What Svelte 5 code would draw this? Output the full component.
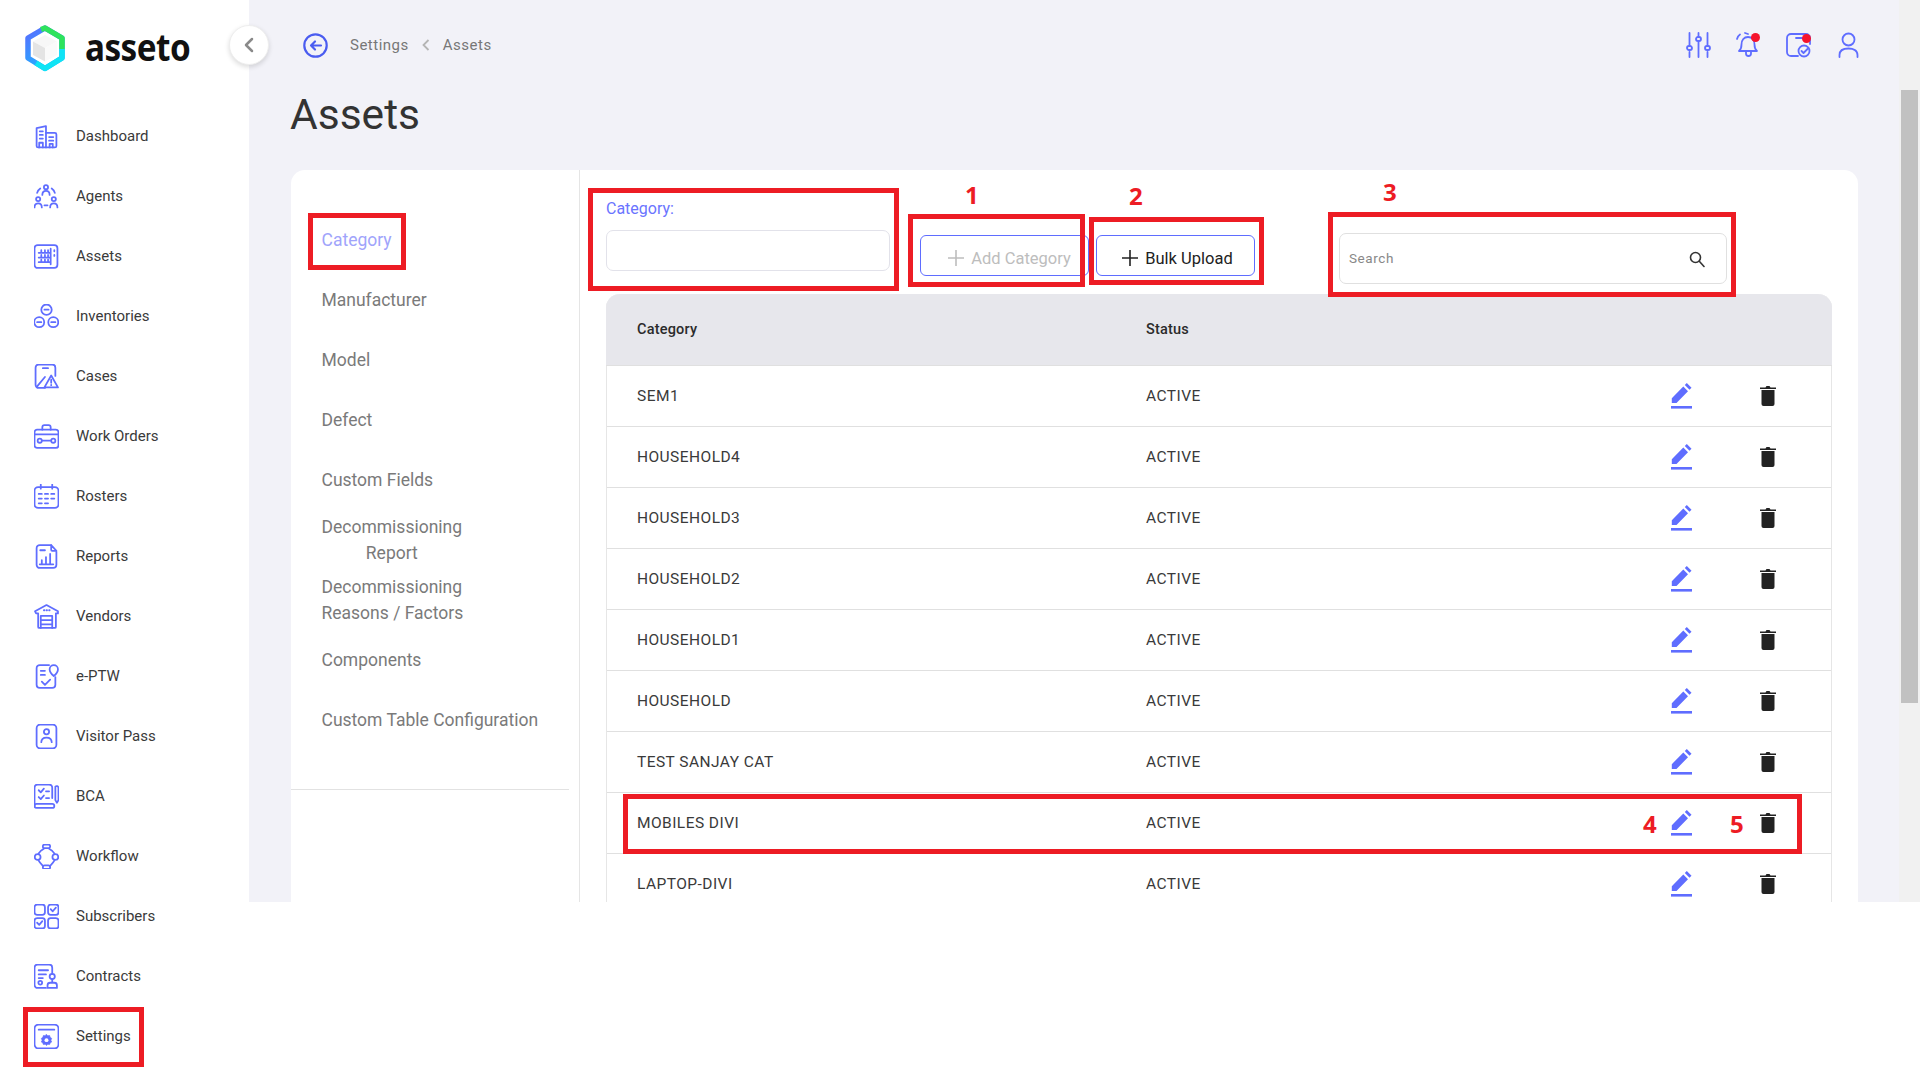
<script lang="ts">
  const g = (s: string) => s;

  const navItems = [
    { label: 'Dashboard', icon: g('<path d="M3 4.500 12 2.500V23H4.500A1.500 1.500 0 0 1 3 21.500Z"/><path d="M12 9h8.500A1.500 1.500 0 0 1 22 10.500v11a1.500 1.500 0 0 1-1.500 1.500H12"/><path d="M6 7.500h3M6 11h3M6 14.500h3M15 13h4M15 16.500h4M5.500 23v-4.500h3.500V23M15.500 23v-3.500h3V23"/>') },
    { label: 'Agents', icon: g('<circle cx="12" cy="3.500" r="2"/><circle cx="4.500" cy="15" r="2"/><circle cx="19.500" cy="15" r="2"/><path d="M8.500 11c0-2.500 1.500-4 3.500-4s3.500 1.500 3.500 4M3.500 9C4 7 5 5.800 6.500 4.800M20.500 9C20 7 19 5.800 17.500 4.800M1 23c0-2.500 1.500-4 3.500-4S8 20.500 8 23M16 23c0-2.500 1.500-4 3.500-4s3.500 1.500 3.500 4M10.500 21h3"/>') },
    { label: 'Assets', icon: g('<rect x="1" y="1.500" width="22" height="22" rx="3"/><path d="M5 9h11M5 13.500h11M5 18h11M7.500 6.500V9M11 6.500V9M14 6.500V9M7.500 11v2.500M11 11v2.500M14 11v2.500M7.500 15.500V18M11 15.500V18M14 15.500V18M16.500 5v15M20 6.500v1M20 11v1"/>') },
    { label: 'Inventories', icon: g('<circle cx="12.500" cy="6" r="5"/><circle cx="5.500" cy="18" r="4.800"/><circle cx="19" cy="18" r="4.800"/><path d="M10.500 6h4M3.500 18h4M17 18h4"/>') },
    { label: 'Cases', icon: g('<path d="M11 23.500H5a3 3 0 0 1-3-3V4a3 3 0 0 1 3-3h13a3 3 0 0 1 3 3v8"/><path d="M9 4.500h5M3.500 22 11 13M17 11.500 23.500 23H10.500Z"/><path d="M17 15.500v3M17 20.500v.3"/>') },
    { label: 'Work Orders', icon: g('<rect x="1" y="6" width="23" height="17.500" rx="2.500"/><path d="M8.500 6V3.500A2 2 0 0 1 10.500 1.500h4a2 2 0 0 1 2 2V6M1 10.500h23M8 16.500h9"/><circle cx="6" cy="16.500" r="2"/><circle cx="19" cy="16.500" r="2"/>') },
    { label: 'Rosters', icon: g('<rect x="1" y="3.500" width="23" height="20" rx="3.500"/><path d="M7 1v4M18 1v4M5 10h3M11 10h3M17 10h3M5 14.500h3M11 14.500h3M17 14.500h3M5 19h3M11 19h3"/>') },
    { label: 'Reports', icon: g('<path d="M22 8v12.500a3 3 0 0 1-3 3H6a3 3 0 0 1-3-3V4.500a3 3 0 0 1 3-3h11"/><path d="M17 1.500 22 7h-4a1 1 0 0 1-1-1ZM6.500 6.500H11M6 20h13M8 19v-3M12 19v-6M16 19v-9"/>') },
    { label: 'Vendors', icon: g('<path d="M1.500 7.500 12.500 1.500l11 6v2h-2v13a1 1 0 0 1-1 1h-15a1 1 0 0 1-1-1v-13h-2Z"/><path d="M7 23.500V12h11v11.500M7 16h11M7 20h11M10 6.500h.5M12.500 6.500h.5M15 6.500h.5"/>') },
    { label: 'e-PTW', icon: g('<path d="M15 1.500H6a3 3 0 0 0-3 3v16a3 3 0 0 0 3 3h12a3 3 0 0 0 3-3V13"/><path d="M7 7h4M7 11h4M8 17.500l3 3 5-5"/><path d="M19.500 12c-2.500-2-4-4-4-6.500a4 4 0 0 1 8 0c0 2.500-1.500 4.500-4 6.500Z"/>') },
    { label: 'Visitor Pass', icon: g('<rect x="3" y="1" width="19" height="23" rx="3.500"/><circle cx="12.500" cy="8" r="2.500"/><path d="M7.500 18c0-3 2-4.500 5-4.500s5 1.500 5 4.500"/>') },
    { label: 'BCA', icon: g('<path d="M18 14V4a3 3 0 0 0-3-3H4a3 3 0 0 0-3 3v18"/><rect x="1" y="19.500" width="19" height="4" rx="2"/><path d="M5 6.500l2 2 3-3.500M5 13l2 2 3-3.500M12 7.500h3M12 14h3"/><path d="M21 3a1.800 1.800 0 0 1 3 1v12l-1.500 2.500L21 16V4Z"/>') },
    { label: 'Workflow', icon: g('<rect x="9" y="1" width="7" height="3.500" rx="1.700"/><rect x="9" y="21" width="7" height="3.500" rx="1.700"/><circle cx="4" cy="13" r="2.800"/><circle cx="21" cy="13" r="2.800"/><path d="M5 9.500C6 7.500 8 6 10 5M20 9.500C19 7.500 17 6 15 5M5 16.500C6 18.500 7.500 20 9 21.500M20 16.500C19 18.500 17.500 20 16 21.500"/>') },
    { label: 'Subscribers', icon: g('<rect x="1" y="1" width="10" height="10" rx="2.500"/><rect x="14" y="1" width="10" height="10" rx="2.500"/><rect x="1" y="14" width="10" height="10" rx="2.500"/><rect x="14" y="14" width="10" height="10" rx="2.500"/><path d="M16.500 5.500l2 2 3-3.500M3.500 18.500l2 2 3-3.500"/>') },
    { label: 'Contracts', icon: g('<path d="M12 23.500H4a3 3 0 0 1-3-3V4a3 3 0 0 1 3-3h11a3 3 0 0 1 3 3v6"/><path d="M5 6.500h9M5 10.500h7M5 14h4"/><circle cx="6.500" cy="18.500" r="1.800"/><circle cx="18" cy="12.500" r="2.500"/><path d="M18 15v3M13.500 23.500v-2.500a2.500 2.500 0 0 1 2.500-2.500h4a2.500 2.500 0 0 1 2.500 2.500v2.500Z"/>') },
    { label: 'Settings', icon: g('<rect x="1" y="1" width="23" height="23" rx="4"/><path d="M5 6h15"/><path d="M12.500 10.500l1.200 1.300 1.800-.3.500 1.800 1.500 1-.8 1.700.8 1.700-1.500 1-.5 1.500-1.800-.2-1.200 1.200-1.200-1.200-1.800.2-.5-1.500-1.500-1 .8-1.700-.8-1.700 1.500-1 .5-1.800 1.800.3Z" fill="currentColor" stroke-width="0.600"/><circle cx="12.500" cy="16" r="1.900" fill="#fff" stroke="none"/>') }
  ];

  const tabs = [
    'Manufacturer',
    'Model',
    'Defect',
    'Custom Fields'
  ];

  const rows = [
    'SEM1',
    'HOUSEHOLD4',
    'HOUSEHOLD3',
    'HOUSEHOLD2',
    'HOUSEHOLD1',
    'HOUSEHOLD',
    'TEST SANJAY CAT',
    'MOBILES DIVI',
    'LAPTOP-DIVI'
  ];
</script>

<div class="app">
  <aside class="sidebar">
    <div class="logo">
      <svg width="42" height="47" viewBox="0 0 42 47" fill="none">
        <defs>
          <linearGradient id="hexL" x1="0" y1="0" x2="0.6" y2="1">
            <stop offset="0" stop-color="#5a6cff" />
            <stop offset="1" stop-color="#19b8ff" />
          </linearGradient>
        </defs>
        <path d="M21 3 38 13V33L21 43.500 4 33V13Z" fill="#fff" stroke="url(#hexL)" stroke-width="5.500" stroke-linejoin="round" />
        <path d="M17 4.500 21 3 38 13V24" stroke="#2ee35c" stroke-width="5.500" stroke-linejoin="round" />
        <path d="M38 24V33L21 43.500 12 38" stroke="#0fe4f5" stroke-width="5.500" stroke-linejoin="round" />
        <path d="M21 10 33 16.500 21 23 9 16.500Z" fill="#f7f7f7" />
        <path d="M9 16.500 21 23V36.500L9 30Z" fill="#e4e4e4" />
        <path d="M33 16.500 21 23V36.500L33 30Z" fill="#fafafa" />
      </svg>
      <span class="wordmark">asseto</span>
    </div>

    <nav class="nav">
      {#each navItems as item}
        <div class="navItem">
          <svg class="navIcon" viewBox="0.5 0.500 24 24" fill="none" stroke="currentColor" stroke-width="1.700" stroke-linecap="round" stroke-linejoin="round">
            {@html item.icon}
          </svg>
          <span>{item.label}</span>
        </div>
      {/each}
    </nav>

    <div class="mark settingsMark"></div>
  </aside>

  <button class="collapse" aria-label="Collapse">
    <svg width="14" height="16" viewBox="0 0 14 16" fill="none" stroke="#8a8a8a" stroke-width="2.500" stroke-linecap="round" stroke-linejoin="round">
      <path d="M10 2 4 8l6 6" />
    </svg>
  </button>

  <main class="main">
    <header class="topbar">
      <div class="crumbs">
        <svg class="back" width="25" height="25" viewBox="0 0 25 25" fill="none" stroke="#4a5cf0" stroke-width="2.200" stroke-linecap="round" stroke-linejoin="round">
          <circle cx="12.500" cy="12.500" r="11.200" />
          <path d="M18 12.500H8M12 8.500l-4 4 4 4" />
        </svg>
        <span>Settings</span>
        <svg width="10" height="12" viewBox="0 0 10 12" fill="none" stroke="#b5b5b5" stroke-width="1.800">
          <path d="M7.500 1 2.500 6l5 5" />
        </svg>
        <span>Assets</span>
      </div>
      <div class="topIcons">
        <svg viewBox="0 0 25 26" fill="none" stroke="currentColor" stroke-width="1.800" stroke-linecap="round">
          <path d="M3.500 1v13M3.500 20v5M12.500 1v3M12.500 10v15M21.500 1v13M21.500 20v5" />
          <rect x="1" y="14" width="5" height="4" rx="2" />
          <rect x="10" y="5" width="5" height="4" rx="2" />
          <rect x="19" y="14" width="5" height="4" rx="2" />
        </svg>
        <span class="dotWrap">
          <svg viewBox="0 0 25 26" fill="none" stroke="currentColor" stroke-width="1.800" stroke-linecap="round" stroke-linejoin="round">
            <path d="M3 19c2-1.500 2.500-3 2.500-6.500C5.500 8 8 5 12 5s6.500 3 6.500 7.500c0 3.500.5 5 2.500 6.500Z" />
            <path d="M10 19v2.500a2.500 2.500 0 0 0 5 0V19M1 7c.6-2 1.500-3.500 3-4.500M9 1l3 1" />
          </svg>
          <i class="dot bell"></i>
        </span>
        <span class="dotWrap">
          <svg viewBox="0 0 25 26" fill="none" stroke="currentColor" stroke-width="1.800" stroke-linecap="round" stroke-linejoin="round">
            <path d="M12 24H5a4 4 0 0 1-4-4V6a4 4 0 0 1 4-4h15a4 4 0 0 1 4 4v6M10 6h6" />
            <circle cx="18" cy="19" r="5.500" />
            <path d="M15.500 19l2 2 5-5" />
          </svg>
          <i class="dot cal"></i>
        </span>
        <svg viewBox="0 0 25 26" fill="none" stroke="currentColor" stroke-width="1.800" stroke-linecap="round">
          <circle cx="12.500" cy="7.500" r="6" />
          <path d="M3.500 25v-2c0-4.500 4-6.500 9-6.500s9 2 9 6.500v2" />
        </svg>
      </div>
    </header>

    <h1>Assets</h1>

    <section class="card">
      <div class="tabs">
        <div class="tabList">
          <div class="tab active">Category</div>
          {#each tabs as t}
            <div class="tab">{t}</div>
          {/each}
          <div class="tab center"><span>Decommissioning<br />Report</span></div>
          <div class="tab"><span>Decommissioning<br />Reasons / Factors</span></div>
          <div class="tab">Components</div>
          <div class="tab">Custom Table Configuration</div>
        </div>
      </div>

      <div class="content">
        <div class="toolbar">
          <div class="field">
            <label for="cat">Category:</label>
            <input id="cat" type="text" />
          </div>
          <button class="btn add">
            <svg width="16" height="16" viewBox="0 0 16 16" stroke="#bdbdbd" stroke-width="1.600"><path d="M8 0v16M0 8h16" /></svg>
            Add Category
          </button>
          <button class="btn bulk">
            <svg width="16" height="16" viewBox="0 0 16 16" stroke="#222" stroke-width="1.600"><path d="M8 0v16M0 8h16" /></svg>
            Bulk Upload
          </button>
          <div class="search">
            <span>Search</span>
            <svg width="18" height="18" viewBox="0 0 18 18" fill="none" stroke="#333" stroke-width="1.600" stroke-linecap="round">
              <circle cx="7.500" cy="7.500" r="5" />
              <path d="M11.500 11.500 16 16.500" />
            </svg>
          </div>
        </div>

        <div class="table">
          <div class="row head">
            <span>Category</span>
            <span>Status</span>
          </div>
          {#each rows as name}
            <div class="row">
              <span>{name}</span>
              <span>ACTIVE</span>
              <span class="cell">
                <svg width="21" height="26" viewBox="0 0 21 26" fill="#5f6dff">
                  <path d="M.8 20V15.200L12.300 3.500 17 8.200 5.500 20ZM13.800 2 15.800 0 20.500 4.700 18.500 6.700Z" />
                  <rect x="0" y="23" width="21" height="2.600" />
                </svg>
              </span>
              <span class="cell">
                <svg class="trash" width="16" height="21" viewBox="0 0 16 21" fill="#222">
                  <path d="M1.500 5h13v14a2 2 0 0 1-2 2h-9a2 2 0 0 1-2-2Z" />
                  <path d="M0 2.500h5.500L6.500 1h3l1 1.500H16V4H0Z" />
                </svg>
              </span>
            </div>
          {/each}
        </div>
      </div>
    </section>

    <div class="scrollTrack"><div class="scrollThumb"></div></div>

    <!-- red annotation boxes drawn over the screenshot -->
    <div class="mark m-tab"></div>
    <div class="mark m-field"></div>
    <div class="mark m-add"></div>
    <div class="mark m-bulk"></div>
    <div class="mark m-search"></div>
    <div class="mark m-row"></div>
    <span class="num n1">1</span>
    <span class="num n2">2</span>
    <span class="num n3">3</span>
    <span class="num n4">4</span>
    <span class="num n5">5</span>
  </main>
</div>

<style>
  :global(body) {
    margin: 0;
    background: #fff;
  }

  .app {
    position: relative;
    display: flex;
    align-items: flex-start;
    width: 1920px;
    height: 1070px;
    overflow: hidden;
    font-family: Roboto, 'Liberation Sans', sans-serif;
    color: #333;
  }

  .sidebar {
    position: relative;
    flex: 0 0 249px;
    height: 1070px;
    background: #fff;
  }

  .logo {
    display: flex;
    align-items: center;
    gap: 19px;
    height: 47px;
    padding: 25px 0 0 24px;
  }

  .wordmark {
    padding-bottom: 6px;
    font-family: 'Noto Sans', sans-serif;
    font-size: 38px;
    font-weight: 700;
    letter-spacing: -0.6px;
    color: #111;
    transform: scaleX(0.875);
    transform-origin: left center;
  }

  .nav {
    margin-top: 34px;
  }

  .navItem {
    display: flex;
    align-items: center;
    gap: 17px;
    height: 60px;
    padding-left: 34px;
    font-size: 15px;
    color: #3a3a3a;
  }

  .navIcon {
    width: 25px;
    height: 25px;
    flex: none;
    color: #5f6dff;
  }

  .collapse {
    position: absolute;
    left: 229px;
    top: 25px;
    width: 40px;
    height: 40px;
    padding: 0;
    display: flex;
    align-items: center;
    justify-content: center;
    border: 1px solid #eee;
    border-radius: 50%;
    background: #fff;
    box-shadow: 0 2px 5px rgba(0, 0, 0, 0.14);
    z-index: 2;
  }

  .main {
    position: relative;
    flex: 1;
    height: 902px;
    padding: 0 62px 0 42px;
    box-sizing: border-box;
    overflow: hidden;
    background: #f2f2f8;
  }

  .topbar {
    display: flex;
    align-items: center;
    justify-content: space-between;
    height: 90px;
  }

  .crumbs {
    display: flex;
    align-items: center;
    gap: 12px;
    padding-left: 12px;
    font-size: 15px;
    letter-spacing: 0.5px;
    color: #777;
  }

  .back {
    margin-right: 10px;
  }

  .topIcons {
    display: flex;
    gap: 25px;
    margin-right: -3px;
    color: #5f6dff;
  }

  .topIcons svg {
    display: block;
    width: 25px;
    height: 26px;
  }

  .dotWrap {
    position: relative;
    display: block;
  }

  .dot {
    position: absolute;
    width: 9px;
    height: 9px;
    border-radius: 50%;
    background: #f5142c;
  }

  .dot.bell {
    left: 15px;
    top: 1px;
  }

  .dot.cal {
    left: 16px;
    top: 2px;
  }

  h1 {
    margin: 0 0 0 -1px;
    height: 80px;
    font-size: 42.500px;
    font-weight: 400;
    line-height: 50px;
    color: #333;
  }

  .card {
    display: flex;
    height: 900px;
    border-radius: 14px 14px 0 0;
    background: #fff;
  }

  .tabs {
    flex: 0 0 288px;
    border-right: 1px solid #e5e5e5;
  }

  .tabList {
    width: 278px;
    height: 620px;
    padding-top: 40px;
    box-sizing: border-box;
    border-bottom: 1px solid #e2e2e2;
  }

  .tab {
    display: flex;
    align-items: center;
    height: 60px;
    padding-left: 30.500px;
    font-size: 17.500px;
    line-height: 26px;
    color: #7a7a7a;
  }

  .tab.active {
    color: #a0a4fb;
  }

  .tab.center span {
    text-align: center;
  }

  .content {
    flex: 1;
    min-width: 0;
    padding: 0 26px 0 26px;
  }

  .toolbar {
    position: relative;
    display: flex;
    align-items: flex-start;
    height: 124px;
  }

  .field {
    width: 284px;
    margin-right: 30px;
    padding-top: 30px;
  }

  .field label {
    display: block;
    font-size: 16px;
    line-height: 18px;
    color: #6a74ff;
  }

  .field input {
    display: block;
    width: 100%;
    height: 41px;
    margin-top: 12px;
    box-sizing: border-box;
    border: 1px solid #e2e2ea;
    border-radius: 7px;
    background: #fff;
  }

  .btn {
    display: flex;
    align-items: center;
    justify-content: center;
    gap: 7px;
    height: 41px;
    margin-top: 65px;
    padding-top: 6px;
    box-sizing: border-box;
    border: 1px solid #5f6dff;
    border-radius: 6px;
    background: #fff;
    font-family: inherit;
    font-size: 16.500px;
  }

  .add {
    width: 169px;
    margin-right: 7px;
    padding-left: 16px;
    color: #bdbdbd;
  }

  .bulk {
    width: 159px;
    margin-right: 84px;
    padding-left: 10px;
    color: #222;
  }

  .search {
    display: flex;
    align-items: center;
    justify-content: space-between;
    width: 388px;
    height: 51px;
    margin-top: 63px;
    padding: 0 20px 2px 9px;
    box-sizing: border-box;
    border: 1px solid #e0e0e0;
    border-radius: 7px;
    font-size: 13.500px;
    letter-spacing: 0.6px;
    color: #888;
  }

  .search svg {
    margin-top: 2px;
  }

  .table {
    border: 1px solid #e6e6e6;
    border-top: 0;
    border-radius: 14px 14px 0 0;
  }

  .row {
    display: grid;
    grid-template-columns: 509px 1fr 85px 87px;
    align-items: center;
    height: 61px;
    padding: 0 20px 0 30px;
    box-sizing: border-box;
    border-bottom: 1px solid #e0e0e0;
    font-size: 15.500px;
    letter-spacing: 0.45px;
    color: #3a3a3a;
  }

  .row.head {
    height: 72px;
    margin: 0 -1px;
    padding-left: 31px;
    border-radius: 14px 14px 0 0;
    background: #e7e7ec;
    font-size: 14.500px;
    font-weight: 500;
    letter-spacing: 0.2px;
    color: #2b2b2b;
  }

  .cell {
    display: flex;
    justify-content: center;
  }

  .trash {
    margin-top: -2px;
  }

  .scrollTrack {
    position: absolute;
    right: 0;
    top: 0;
    width: 21px;
    height: 100%;
    background: #f1f1f1;
  }

  .scrollThumb {
    width: 17px;
    height: 613px;
    margin: 90px 0 0 2px;
    background: #c1c1c1;
  }

  .mark {
    position: absolute;
    box-sizing: border-box;
    border: 5px solid #ed1c24;
    pointer-events: none;
  }

  .settingsMark {
    left: 23px;
    top: 1007px;
    width: 121px;
    height: 60px;
  }

  /* annotation boxes, offsets from .main (x - 249) */
  .m-tab {
    left: 59px;
    top: 213px;
    width: 98px;
    height: 57px;
  }

  .m-field {
    left: 339px;
    top: 188px;
    width: 311px;
    height: 103px;
  }

  .m-add {
    left: 659px;
    top: 214px;
    width: 177px;
    height: 73px;
  }

  .m-bulk {
    left: 840px;
    top: 217px;
    width: 175px;
    height: 68px;
  }

  .m-search {
    left: 1079px;
    top: 212px;
    width: 408px;
    height: 85px;
  }

  .m-row {
    left: 374px;
    top: 794px;
    width: 1179px;
    height: 60px;
  }

  .num {
    position: absolute;
    font-family: 'Open Sans', sans-serif;
    font-size: 24px;
    font-weight: 700;
    line-height: 28px;
    color: #ed1c24;
  }

  .n1 {
    left: 716px;
    top: 181px;
  }

  .n2 {
    left: 880px;
    top: 182px;
  }

  .n3 {
    left: 1134px;
    top: 178px;
  }

  .n4 {
    left: 1394px;
    top: 810px;
  }

  .n5 {
    left: 1481px;
    top: 810px;
  }
</style>
